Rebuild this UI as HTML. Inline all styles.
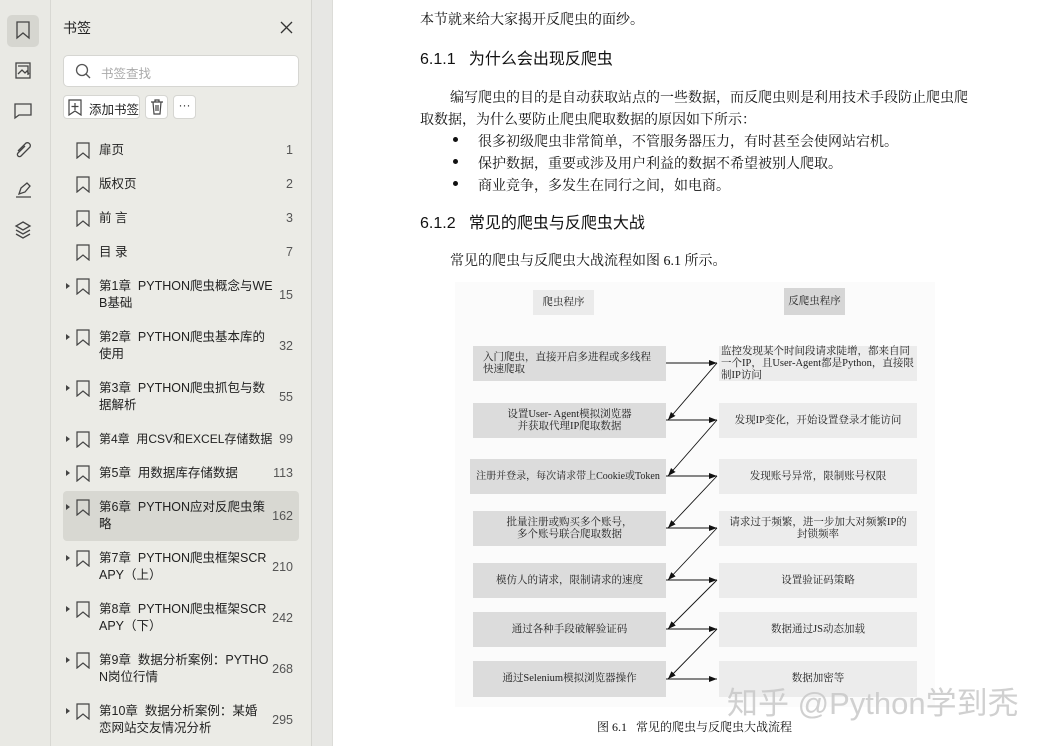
<!DOCTYPE html>
<html><head><meta charset="utf-8"><style>
*{margin:0;padding:0;box-sizing:border-box}
body{width:1045px;height:746px;overflow:hidden;position:relative;background:#fff;font-family:"Liberation Sans","Noto Sans CJK SC",sans-serif}
.a{position:absolute}
#bar{left:0;top:0;width:51px;height:746px;background:#e9e9e4;border-right:1px solid #d8d8d3}
#pan{left:51px;top:0;width:261px;height:746px;background:#ebebe6;border-right:1px solid #d4d4cf}
#gap{left:312px;top:0;width:21px;height:746px;background:#e7e7e4;border-right:1px solid #dcdcd8}
.it{position:absolute;left:12px;width:236px;font-size:12.5px;color:#222;line-height:17px}
.it .t{position:absolute;left:36px;white-space:nowrap}
.it .n{position:absolute;right:6px;color:#555;font-size:12.5px}
.it .tri{position:absolute;left:3px;width:0;height:0;border-left:4px solid #444;border-top:3px solid transparent;border-bottom:3px solid transparent}
.it svg{position:absolute;left:13px}
.s{font-family:"Liberation Serif","Noto Serif CJK SC",serif;font-size:14px;color:#111;position:absolute;white-space:nowrap}
.h{font-family:"Liberation Sans","Noto Sans CJK SC",sans-serif;font-size:16px;color:#111;position:absolute;white-space:nowrap}
.bx{position:absolute;background:#dcdcdc;font-family:"Liberation Serif","Noto Serif CJK SC",serif;font-size:10.5px;color:#222;display:flex;align-items:center;justify-content:center;text-align:center;line-height:12px}
.rb{background:#ececec}
.bul{position:absolute;left:453px;width:5px;height:5px;border-radius:50%;background:#111}
</style></head><body>
<div id="bar" class="a">
 <div class="a" style="left:7px;top:15px;width:32px;height:32px;background:#d6d6d0;border-radius:5px"></div>
 <svg class="a" style="left:0;top:0" width="51" height="250" fill="none" stroke="#444" stroke-width="1.3">
  <path d="M17 22h12v16l-6-5-6 5z"/>
  <rect x="16" y="63" width="14" height="15"/><path d="M18 74l4-4 3 3 2-2 2 3M18 66h10v9"/>
  <path d="M15 104h16v11h-12l-4 3z"/>
  <path d="M18 151l8-8a3 3 0 0 1 4 4l-9 9a2 2 0 0 1-3-3l7-7"/>
  <path d="M16 197h15M19 194l2-6 6-5 3 3-5 6z"/>
  <path d="M23 222l7 4-7 4-7-4zM16 230l7 4 7-4M16 234l7 4 7-4"/>
 </svg>
</div>
<div id="pan" class="a">
 <div class="a" style="left:12px;top:18px;font-size:14px;color:#222">书签</div>
 <svg class="a" style="left:229px;top:21px" width="13" height="13" stroke="#333" stroke-width="1.3"><path d="M1 1l11 11M12 1L1 12"/></svg>
 <div class="a" style="left:12px;top:55px;width:236px;height:32px;background:#fff;border:1px solid #d6d6d2;border-radius:5px"></div>
 <svg class="a" style="left:24px;top:63px" width="17" height="17" fill="none" stroke="#555" stroke-width="1.3"><circle cx="7" cy="7" r="5.5"/><path d="M11 11l4 4"/></svg>
 <div class="a" style="left:50px;top:63px;font-size:12.5px;color:#aaa">书签查找</div>
 <div class="a" style="left:12px;top:95px;width:77px;height:24px;background:#fff;border:1px solid #d6d6d2;border-radius:4px"></div>
 <svg class="a" style="left:17px;top:99px" width="14" height="17" fill="none" stroke="#444" stroke-width="1.2"><path d="M1 1h12v15l-6-4-6 4z M7 4v7M3.5 7.5h7"/></svg>
 <div class="a" style="left:38px;top:99px;font-size:12.5px;color:#222">添加书签</div>
 <div class="a" style="left:94px;top:95px;width:23px;height:24px;background:#fff;border:1px solid #d6d6d2;border-radius:4px"></div>
 <svg class="a" style="left:99px;top:99px" width="14" height="16" fill="none" stroke="#444" stroke-width="1.2"><path d="M1 3h12M5 3V1h4v2M3 3l1 12h6l1-12M6 6v6M8 6v6"/></svg>
 <div class="a" style="left:122px;top:95px;width:23px;height:24px;background:#fff;border:1px solid #d6d6d2;border-radius:4px;text-align:center;font-size:12px;line-height:18px;color:#333">···</div>
 <div class="a" style="left:12px;top:491px;width:236px;height:50px;background:#d8d8d2;border-radius:4px"></div>
</div>
<div id="gap" class="a"></div>

<div class="a" style="left:51px;top:0;width:261px;height:746px">
 <div class="it" style="top:142px;height:17px"><svg width="14" height="17" fill="none" stroke="#444" stroke-width="1.2"><path d="M1 1h12v15l-6-5-6 5z"/></svg><span class="t">扉页</span><span class="n">1</span></div>
 <div class="it" style="top:176px;height:17px"><svg width="14" height="17" fill="none" stroke="#444" stroke-width="1.2"><path d="M1 1h12v15l-6-5-6 5z"/></svg><span class="t">版权页</span><span class="n">2</span></div>
 <div class="it" style="top:210px;height:17px"><svg width="14" height="17" fill="none" stroke="#444" stroke-width="1.2"><path d="M1 1h12v15l-6-5-6 5z"/></svg><span class="t">前 言</span><span class="n">3</span></div>
 <div class="it" style="top:244px;height:17px"><svg width="14" height="17" fill="none" stroke="#444" stroke-width="1.2"><path d="M1 1h12v15l-6-5-6 5z"/></svg><span class="t">目 录</span><span class="n">7</span></div>

 <div class="it" style="top:278px"><i class="tri" style="top:5px"></i><svg width="14" height="17" fill="none" stroke="#444" stroke-width="1.2"><path d="M1 1h12v15l-6-5-6 5z"/></svg><span class="t">第1章&nbsp;&nbsp;PYTHON爬虫概念与WE<br>B基础</span><span class="n" style="top:9px">15</span></div>
 <div class="it" style="top:329px"><i class="tri" style="top:5px"></i><svg width="14" height="17" fill="none" stroke="#444" stroke-width="1.2"><path d="M1 1h12v15l-6-5-6 5z"/></svg><span class="t">第2章&nbsp;&nbsp;PYTHON爬虫基本库的<br>使用</span><span class="n" style="top:9px">32</span></div>
 <div class="it" style="top:380px"><i class="tri" style="top:5px"></i><svg width="14" height="17" fill="none" stroke="#444" stroke-width="1.2"><path d="M1 1h12v15l-6-5-6 5z"/></svg><span class="t">第3章&nbsp;&nbsp;PYTHON爬虫抓包与数<br>据解析</span><span class="n" style="top:9px">55</span></div>
 <div class="it" style="top:431px"><i class="tri" style="top:5px"></i><svg width="14" height="17" fill="none" stroke="#444" stroke-width="1.2"><path d="M1 1h12v15l-6-5-6 5z"/></svg><span class="t" style="font-size:12px">第4章&nbsp;&nbsp;用CSV和EXCEL存储数据</span><span class="n">99</span></div>
 <div class="it" style="top:465px"><i class="tri" style="top:5px"></i><svg width="14" height="17" fill="none" stroke="#444" stroke-width="1.2"><path d="M1 1h12v15l-6-5-6 5z"/></svg><span class="t">第5章&nbsp;&nbsp;用数据库存储数据</span><span class="n">113</span></div>
 <div class="it" style="top:499px"><i class="tri" style="top:5px"></i><svg width="14" height="17" fill="none" stroke="#444" stroke-width="1.2"><path d="M1 1h12v15l-6-5-6 5z"/></svg><span class="t">第6章&nbsp;&nbsp;PYTHON应对反爬虫策<br>略</span><span class="n" style="top:9px">162</span></div>
 <div class="it" style="top:550px"><i class="tri" style="top:5px"></i><svg width="14" height="17" fill="none" stroke="#444" stroke-width="1.2"><path d="M1 1h12v15l-6-5-6 5z"/></svg><span class="t">第7章&nbsp;&nbsp;PYTHON爬虫框架SCR<br>APY（上）</span><span class="n" style="top:9px">210</span></div>
 <div class="it" style="top:601px"><i class="tri" style="top:5px"></i><svg width="14" height="17" fill="none" stroke="#444" stroke-width="1.2"><path d="M1 1h12v15l-6-5-6 5z"/></svg><span class="t">第8章&nbsp;&nbsp;PYTHON爬虫框架SCR<br>APY（下）</span><span class="n" style="top:9px">242</span></div>
 <div class="it" style="top:652px"><i class="tri" style="top:5px"></i><svg width="14" height="17" fill="none" stroke="#444" stroke-width="1.2"><path d="M1 1h12v15l-6-5-6 5z"/></svg><span class="t">第9章&nbsp;&nbsp;数据分析案例：PYTHO<br>N岗位行情</span><span class="n" style="top:9px">268</span></div>
 <div class="it" style="top:703px"><i class="tri" style="top:5px"></i><svg width="14" height="17" fill="none" stroke="#444" stroke-width="1.2"><path d="M1 1h12v15l-6-5-6 5z"/></svg><span class="t">第10章&nbsp;&nbsp;数据分析案例：某婚<br>恋网站交友情况分析</span><span class="n" style="top:9px">295</span></div>
</div>

<div class="s" style="left:420px;top:9px">本节就来给大家揭开反爬虫的面纱。</div>
<div class="h" style="left:420px;top:45px">6.1.1&nbsp;&nbsp;&nbsp;为什么会出现反爬虫</div>
<div class="s" style="left:450px;top:87px">编写爬虫的目的是自动获取站点的一些数据，而反爬虫则是利用技术手段防止爬虫爬</div>
<div class="s" style="left:420px;top:109px">取数据，为什么要防止爬虫爬取数据的原因如下所示：</div>
<div class="bul" style="top:137px"></div><div class="bul" style="top:159px"></div><div class="bul" style="top:181px"></div>
<div class="s" style="left:478px;top:131px">很多初级爬虫非常简单，不管服务器压力，有时甚至会使网站宕机。</div>
<div class="s" style="left:478px;top:153px">保护数据，重要或涉及用户利益的数据不希望被别人爬取。</div>
<div class="s" style="left:478px;top:175px">商业竞争，多发生在同行之间，如电商。</div>
<div class="h" style="left:420px;top:209px">6.1.2&nbsp;&nbsp;&nbsp;常见的爬虫与反爬虫大战</div>
<div class="s" style="left:450px;top:250px">常见的爬虫与反爬虫大战流程如图 6.1 所示。</div>

<div class="a" style="left:455px;top:282px;width:480px;height:425px;background:#fbfbfb"></div>
<div class="bx" style="left:533px;top:290px;width:61px;height:25px;background:#ebebeb">爬虫程序</div>
<div class="bx" style="left:784px;top:288px;width:61px;height:27px;background:#d6d6d6">反爬虫程序</div>

<div class="bx" style="left:473px;top:346px;width:193px;height:35px;justify-content:flex-start;padding-left:10px;text-align:left">入门爬虫，直接开启多进程或多线程<br>快速爬取</div>
<div class="bx rb" style="left:719px;top:346px;width:198px;height:35px;justify-content:flex-start;text-align:left;padding-left:2px">监控发现某个时间段请求陡增，都来自同<br>一个IP，且User-Agent都是Python，直接限<br>制IP访问</div>
<div class="bx" style="left:473px;top:403px;width:193px;height:35px">设置User- Agent模拟浏览器<br>并获取代理IP爬取数据</div>
<div class="bx rb" style="left:719px;top:403px;width:198px;height:35px">发现IP变化，开始设置登录才能访问</div>
<div class="bx" style="left:470px;top:459px;width:196px;height:35px;font-size:10px">注册并登录，每次请求带上Cookie或Token</div>
<div class="bx rb" style="left:719px;top:459px;width:198px;height:35px">发现账号异常，限制账号权限</div>
<div class="bx" style="left:473px;top:511px;width:193px;height:35px">批量注册或购买多个账号，<br>多个账号联合爬取数据</div>
<div class="bx rb" style="left:719px;top:511px;width:198px;height:35px">请求过于频繁，进一步加大对频繁IP的<br>封锁频率</div>
<div class="bx" style="left:473px;top:563px;width:193px;height:35px">模仿人的请求，限制请求的速度</div>
<div class="bx rb" style="left:719px;top:563px;width:198px;height:35px">设置验证码策略</div>
<div class="bx" style="left:473px;top:612px;width:193px;height:35px">通过各种手段破解验证码</div>
<div class="bx rb" style="left:719px;top:612px;width:198px;height:35px">数据通过JS动态加载</div>
<div class="bx" style="left:473px;top:661px;width:193px;height:36px">通过Selenium模拟浏览器操作</div>
<div class="bx rb" style="left:719px;top:661px;width:198px;height:36px">数据加密等</div>
<svg class="a" style="left:0;top:0" width="1045" height="746" fill="none" stroke="#111" stroke-width="0.9">
 <defs><marker id="m" markerWidth="8" markerHeight="6" refX="8" refY="3" orient="auto" markerUnits="userSpaceOnUse"><path d="M0 0L8 3L0 6z" fill="#111" stroke="none"/></marker></defs>
 <g marker-end="url(#m)">
 <path d="M666 363H717"/><path d="M717 363L668 420"/><path d="M666 420H717"/><path d="M717 420L668 476"/><path d="M666 476H717"/><path d="M717 476L668 528"/><path d="M666 528H717"/><path d="M717 528L668 580"/><path d="M666 580H717"/><path d="M717 580L668 629"/><path d="M666 629H717"/><path d="M717 629L668 679"/><path d="M666 679H717"/>
 </g>
</svg>
<div class="a" style="left:727px;top:678px;font-size:31px;color:rgba(200,200,200,0.85);white-space:nowrap;font-family:'Liberation Sans','Noto Sans CJK SC',sans-serif">知乎 @Python学到秃</div>
<div class="s" style="left:597px;top:718px;font-size:12px">图 6.1&nbsp;&nbsp;&nbsp;常见的爬虫与反爬虫大战流程</div>
</body></html>
